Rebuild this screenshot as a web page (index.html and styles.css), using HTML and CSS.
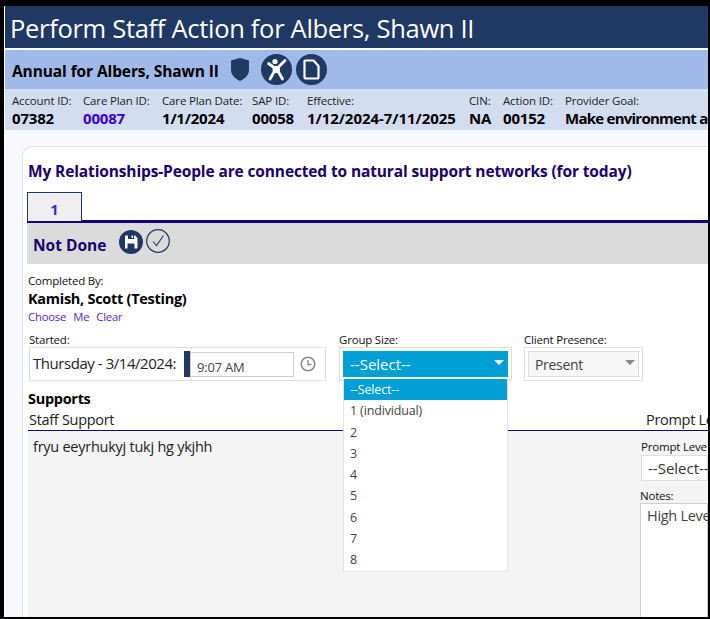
FILE: index.html
```html
<!DOCTYPE html>
<html>
<head>
  <title>Perform Staff Action</title>
  <link rel="stylesheet" href="styles.css">
</head>
<body>
  <div class="frame">
    <h1 class="page-title">Perform Staff Action for Albers, Shawn II</h1>

    <div class="plan-bar">
      <span class="plan-name">Annual for Albers, Shawn II</span>
      <svg class="icon-shield" width="20" height="25" viewBox="0 0 20 25">
        <path d="M10 1 L19 3.500 V13 C19 18 15 21.500 10 24 C5 21.500 1 18 1 13 V3.500 Z" fill="#1f3864"/>
      </svg>
      <svg class="icon-round" width="31" height="31" viewBox="0 0 31 31">
        <circle cx="15.500" cy="15.500" r="15.500" fill="#1f3864"/>
        <circle cx="14" cy="7.500" r="2.600" fill="#fff"/>
        <path d="M7.500 9.500 L13 13.500 V18 L9 25 M24 6.500 L17.500 13 V18 L21.500 25" fill="none" stroke="#fff" stroke-width="2.800" stroke-linecap="round" stroke-linejoin="round"/>
        <path d="M13 12 H17.500 V19 H13 Z" fill="#fff"/>
      </svg>
      <svg class="icon-round" width="31" height="31" viewBox="0 0 31 31">
        <circle cx="15.500" cy="15.500" r="15.500" fill="#1f3864"/>
        <path d="M9 6.500 H17.500 L22.500 12 V23 C22.500 24 22 24.500 21 24.500 H10 C9 24.500 8.500 24 8.500 23 V7 Z" fill="none" stroke="#fff" stroke-width="2.200" stroke-linejoin="round"/>
      </svg>
    </div>

    <div class="info-bar">
      <div class="info-item info-account"><label>Account ID:</label><b>07382</b></div>
      <div class="info-item info-plan"><label>Care Plan ID:</label><b class="link-value">00087</b></div>
      <div class="info-item info-date"><label>Care Plan Date:</label><b>1/1/2024</b></div>
      <div class="info-item info-sap"><label>SAP ID:</label><b>00058</b></div>
      <div class="info-item info-effective"><label>Effective:</label><b>1/12/2024-7/11/2025</b></div>
      <div class="info-item info-cin"><label>CIN:</label><b>NA</b></div>
      <div class="info-item info-action"><label>Action ID:</label><b>00152</b></div>
      <div class="info-item info-goal"><label>Provider Goal:</label><b>Make environment a</b></div>
    </div>

    <div class="content">
      <div class="card">
        <h2 class="goal-title">My Relationships-People are connected to natural support networks (for today)</h2>

        <div class="tabs">
          <div class="tab">1</div>
        </div>

        <div class="status-bar">
          <span class="status-text">Not Done</span>
          <svg class="icon-save" width="24" height="24" viewBox="0 0 24 24">
            <circle cx="12" cy="12" r="12" fill="#1f3864"/>
            <path d="M6 6.500 C6 5.800 6.500 5.500 7 5.500 H9 V9 H15 V5.500 H16 L18.500 8 V17.500 C18.500 18 18 18.500 17.500 18.500 H15.500 V13.500 H8.500 V18.500 H6.500 C6 18.500 6 18 6 17.500 Z" fill="#fff"/>
            <path d="M12.500 5.500 H14 V8 H12.500 Z" fill="#fff"/>
          </svg>
          <svg class="icon-check" width="24" height="24" viewBox="0 0 24 24">
            <circle cx="12" cy="12" r="11.300" fill="none" stroke="#1f3864" stroke-width="1.200"/>
            <path d="M7 12.500 L10.500 16.500 L17.500 6.500" fill="none" stroke="#1f3864" stroke-width="1.100"/>
          </svg>
        </div>

        <div class="completed">
          <div class="small-label">Completed By:</div>
          <div class="completed-name">Kamish, Scott (Testing)</div>
          <div class="completed-links"><a>Choose</a><a>Me</a><a>Clear</a></div>
        </div>

        <div class="fields">
          <div class="field field-started">
            <div class="small-label">Started:</div>
            <div class="field-box started-box">
              <span class="started-date">Thursday - 3/14/2024:</span>
              <span class="time-bar"></span>
              <span class="time-input">9:07 AM</span>
              <svg class="icon-clock" width="16" height="16" viewBox="0 0 16 16">
                <circle cx="8" cy="8" r="6.800" fill="none" stroke="#8a8a8a" stroke-width="1.600"/>
                <path d="M8 4 V8.500 H11.500" fill="none" stroke="#8a8a8a" stroke-width="1.400"/>
              </svg>
            </div>
          </div>

          <div class="field field-group">
            <div class="small-label">Group Size:</div>
            <div class="field-box">
              <div class="select select-open">--Select--<span class="caret"></span></div>
            </div>
            <ul class="dropdown">
              <li class="selected">--Select--</li>
              <li>1 (individual)</li>
              <li>2</li>
              <li>3</li>
              <li>4</li>
              <li>5</li>
              <li>6</li>
              <li>7</li>
              <li>8</li>
            </ul>
          </div>

          <div class="field field-presence">
            <div class="small-label">Client Presence:</div>
            <div class="field-box">
              <div class="select select-plain">Present<span class="caret"></span></div>
            </div>
          </div>
        </div>

        <div class="supports-title">Supports</div>
        <div class="supports-head">
          <span class="head-staff">Staff Support</span>
          <span>Prompt Le</span>
        </div>
        <div class="supports-body">
          <div class="staff-text">fryu eeyrhukyj tukj hg ykjhh</div>
          <div class="prompt-col">
            <div class="small-label prompt-label">Prompt Leve</div>
            <div class="prompt-select">--Select--</div>
            <div class="small-label notes-label">Notes:</div>
            <div class="notes-box">High Leve</div>
          </div>
        </div>
      </div>
    </div>
  </div>
</body>
</html>
```

FILE: styles.css
```css
/* Main Styles */
* {
  box-sizing: border-box;
}

body {
  margin: 0;
  font-family: "Open Sans", "Noto Sans", sans-serif;
  background-color: #fff;
}

.frame {
  width: 710px;
  height: 619px;
  overflow: hidden;
  display: flex;
  flex-direction: column;
  border-style: solid;
  border-color: #000;
  border-width: 6px 2px 2px 4px;
  background-color: #fff;
  padding-left: 1px;
}

.page-title {
  margin: 0;
  height: 42px;
  padding: 0 5px;
  flex-shrink: 0;
  background-color: #1f3864;
  color: #fff;
  font-size: 25.5px;
  font-weight: 400;
  letter-spacing: -0.3px;
  line-height: 45px;
  white-space: nowrap;
}

/* Plan bar */
.plan-bar {
  margin-top: 2px;
  height: 39px;
  flex-shrink: 0;
  display: flex;
  align-items: center;
  padding-left: 7px;
  background-color: #9fbae8;
}

.plan-name {
  width: 218px;
  padding-top: 2px;
  font-size: 15.5px;
  font-weight: 700;
  letter-spacing: -0.1px;
  color: #000;
  white-space: nowrap;
}

.icon-shield {
  margin-right: 11px;
}

.icon-round {
  margin-right: 4px;
}

/* Info bar */
.info-bar {
  height: 41px;
  flex-shrink: 0;
  display: flex;
  padding: 4px 0 0 7px;
  background-color: #d2ddf0;
  white-space: nowrap;
}

.info-item {
  flex-shrink: 0;
}

.info-item label {
  display: block;
  font-size: 11.5px;
  letter-spacing: -0.15px;
  line-height: 15px;
  color: #222;
}

.info-item b {
  display: block;
  font-size: 15px;
  letter-spacing: -0.2px;
  line-height: 21px;
  color: #000;
}

.info-item b.link-value {
  color: #3a00d8;
}

.info-account { width: 71px; }
.info-plan { width: 79px; }
.info-date { width: 90px; }
.info-sap { width: 55px; }
.info-effective { width: 162px; }
.info-cin { width: 34px; }
.info-action { width: 62px; }

.info-effective b {
  letter-spacing: -0.05px;
}

.info-goal b {
  letter-spacing: -0.75px;
}

/* Card */
.content {
  flex: 1;
  min-height: 0;
  padding: 16px 0 0 17px;
  background-color: #f8f9ff;
}

.card {
  position: relative;
  height: 100%;
  padding: 0 0 0 4px;
  background-color: #fff;
  border-top: 1px solid #dcdfe8;
  border-left: 1px solid #dcdfe8;
  border-top-left-radius: 10px;
  display: flex;
  flex-direction: column;
}

.goal-title {
  margin: 0;
  padding: 13px 0 0 1px;
  height: 45px;
  flex-shrink: 0;
  font-size: 15.5px;
  font-weight: 700;
  letter-spacing: -0.13px;
  line-height: 22px;
  color: #1a0070;
  white-space: nowrap;
}

.tabs {
  height: 31px;
  flex-shrink: 0;
  border-bottom: 3px solid #16007a;
}

.tab {
  width: 55px;
  height: 29px;
  text-align: center;
  font-size: 14.5px;
  font-weight: 700;
  line-height: 33px;
  color: #4a20e0;
  background-color: #efefef;
  border: 1px solid #1f3864;
  border-bottom: none;
}

/* Status */
.status-bar {
  height: 41px;
  flex-shrink: 0;
  display: flex;
  align-items: center;
  padding-left: 6px;
  background-color: #dbdbdb;
}

.status-text {
  width: 86px;
  padding-top: 2px;
  font-size: 15.5px;
  font-weight: 700;
  color: #1a0070;
  white-space: nowrap;
}

.icon-save {
  margin-top: -3px;
}

.icon-check {
  margin-top: -6px;
  margin-left: 3px;
}

/* Completed by */
.small-label {
  font-size: 11.5px;
  letter-spacing: -0.2px;
  line-height: 14px;
  color: #111;
}

.completed {
  padding: 10px 0 0 1px;
  height: 69px;
  flex-shrink: 0;
}

.completed-name {
  font-size: 14.5px;
  font-weight: 700;
  letter-spacing: -0.28px;
  line-height: 21px;
  color: #000;
}

.completed-links {
  display: flex;
  gap: 7px;
  font-size: 11.3px;
  letter-spacing: -0.2px;
  line-height: 15px;
  color: #5a20d8;
}

/* Field row */
.fields {
  display: flex;
  flex-shrink: 0;
  height: 56px;
  padding-left: 2px;
}

.field {
  position: relative;
  flex-shrink: 0;
}

.field-started { width: 310px; }
.field-group { width: 185px; }
.field-presence { width: 119px; }

.field-box {
  height: 34px;
  padding: 3px;
  border: 1px solid #dedede;
}

.field-started .field-box {
  width: 297px;
}

.field-group .field-box {
  width: 173px;
}

.started-box {
  display: flex;
  align-items: center;
}

.started-date {
  width: 151px;
  flex-shrink: 0;
  font-size: 15px;
  letter-spacing: -0.45px;
  color: #222;
  white-space: nowrap;
  margin-top: -3px;
}

.time-bar {
  width: 6px;
  height: 26px;
  flex-shrink: 0;
  background-color: #1f3864;
}

.time-input {
  width: 104px;
  height: 25px;
  flex-shrink: 0;
  padding-left: 6px;
  border: 1px solid #cfcfcf;
  font-size: 13px;
  line-height: 28px;
  letter-spacing: -0.2px;
  color: #444;
}

.icon-clock {
  margin-left: 6px;
}

.select {
  position: relative;
  height: 26px;
  font-size: 14px;
  line-height: 26px;
  letter-spacing: -0.3px;
}

.select-open {
  padding-left: 7px;
  font-size: 15px;
  letter-spacing: 0;
  background-color: #009fd6;
  color: #fff;
}

.select-plain {
  padding-left: 6px;
  background-color: #f7f7f7;
  border: 1px solid #dedede;
  line-height: 25px;
  color: #444;
}

.caret {
  position: absolute;
  right: 4px;
  top: 9px;
  border-left: 5px solid transparent;
  border-right: 5px solid transparent;
  border-top: 5px solid #fff;
}

.select-plain .caret {
  right: 3px;
  top: 8px;
  border-top-color: #888;
}

.dropdown {
  position: absolute;
  z-index: 5;
  left: 4px;
  top: 45px;
  width: 165px;
  margin: 0;
  padding: 0;
  list-style: none;
  background-color: #fff;
  border: 1px solid #e2e2e2;
  border-top: 1px solid #fff;
}

.dropdown li {
  height: 21.3px;
  padding-left: 6px;
  font-size: 12.5px;
  line-height: 21px;
  letter-spacing: -0.15px;
  color: #444;
}

.dropdown li.selected {
  background-color: #009fd6;
  color: #fff;
}

/* Supports */
.supports-title {
  height: 21px;
  padding-left: 1px;
  flex-shrink: 0;
  font-size: 14.5px;
  font-weight: 700;
  letter-spacing: -0.3px;
  line-height: 20px;
  color: #000;
}

.supports-head {
  display: flex;
  height: 21px;
  flex-shrink: 0;
  margin-left: 1px;
  padding-left: 1px;
  font-size: 14.5px;
  letter-spacing: -0.3px;
  line-height: 20px;
  color: #222;
  white-space: nowrap;
  border-bottom: 1px solid #16007a;
}

.head-staff {
  width: 617px;
  flex-shrink: 0;
}

.supports-body {
  flex: 1;
  display: flex;
  margin-left: 1px;
  background-color: #f4f4f4;
}

.staff-text {
  width: 612px;
  flex-shrink: 0;
  padding: 6px 0 0 5px;
  font-size: 14.5px;
  letter-spacing: -0.25px;
  line-height: 20px;
  color: #222;
}

.prompt-col {
  flex: 1;
  min-width: 0;
  padding-top: 9px;
  white-space: nowrap;
}

.prompt-label {
  padding-left: 1px;
}

.prompt-select {
  margin-left: 1px;
  height: 26px;
  padding-left: 6px;
  margin-top: 1px;
  background-color: #fff;
  border: 1px solid #dedede;
  font-size: 15px;
  line-height: 24px;
  color: #333;
}

.notes-label {
  margin-top: 8px;
}

.notes-box {
  height: 140px;
  padding: 2px 0 0 6px;
  background-color: #fff;
  border: 1px solid #cfcfcf;
  font-size: 14.5px;
  line-height: 20px;
  letter-spacing: -0.3px;
  color: #444;
}
```
